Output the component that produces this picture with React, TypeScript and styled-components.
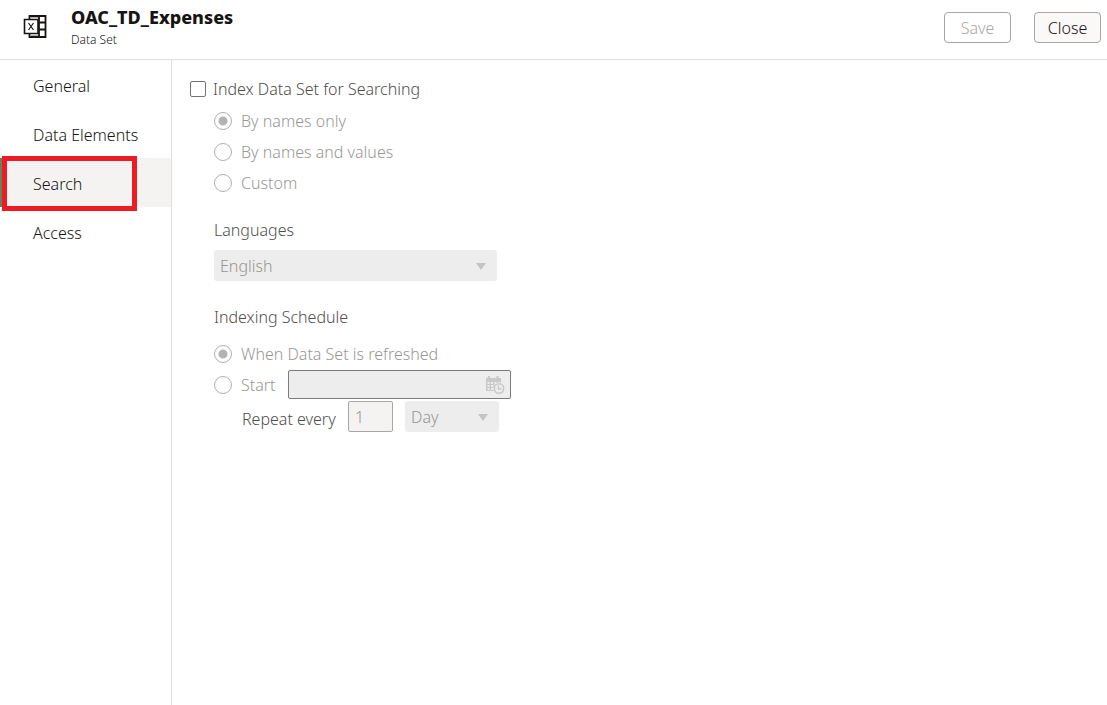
import React from "react";
import styled, { createGlobalStyle, css } from "styled-components";

const GlobalStyle = createGlobalStyle`
  *, *::before, *::after { box-sizing: border-box; }
  body { margin: 0; background: #fff; color: #161513; }
  body, button, input, select {
    font-family: "Noto Sans", "Open Sans", sans-serif;
    font-size: 16px;
    font-weight: 350;
    line-height: 24px;
  }
`;

const Page = styled.div`
  display: flex;
  flex-direction: column;
  min-height: 100vh;
`;

const Header = styled.header`
  display: flex;
  align-items: flex-start;
  gap: 24px;
  height: 60px;
  padding: 6px 6px 0 23px;
  border-bottom: 1px solid #dfdfdf;
`;

const FileIcon = styled.svg`
  flex: none;
  width: 24px;
  height: 24px;
  margin-top: 8px;
`;

const Titles = styled.div`
  flex: 1;
`;

const Title = styled.h1`
  margin: 0;
  font-size: 18px;
  font-weight: 800;
  line-height: 22px;
`;

const Subtitle = styled.p`
  margin: 0;
  font-size: 12px;
  line-height: 24px;
`;

const Actions = styled.div`
  display: flex;
  gap: 23px;
  padding-top: 6px;
`;

const Button = styled.button`
  width: 67px;
  height: 31px;
  padding: 0;
  border: 1px solid #a8a6a4;
  border-radius: 4px;
  background: #fbf9f8;
  color: #161513;

  &:disabled {
    background: #fff;
    color: #a9a8a7;
  }
`;

const Body = styled.div`
  display: flex;
  flex: 1;
`;

const Nav = styled.nav`
  flex: none;
  width: 172px;
  border-right: 1px solid #dfdfdf;
`;

const NavItem = styled.a<{ $selected?: boolean }>`
  position: relative;
  display: flex;
  align-items: center;
  height: 49px;
  padding: 3px 0 0 33px;
  color: #161513;
  text-decoration: none;
  ${(p) =>
    p.$selected &&
    css`
      background: #f4f3f1;
      box-shadow: inset 4px 0 0 #67825b;
    `}
`;

const Highlight = styled.span`
  position: absolute;
  inset: -2px 34px -4px 2px;
  border: 5px solid #ed1c24;
`;

const Main = styled.main`
  flex: 1;
  padding: 17px 18px;
`;

const Choice = styled.label<{ $disabled?: boolean }>`
  display: flex;
  align-items: center;
  gap: ${(p) => (p.$disabled ? 9 : 7)}px;
  min-height: ${(p) => (p.$disabled ? 31 : 24)}px;
  color: ${(p) => (p.$disabled ? "#999795" : "#504e4c")};
`;

const Checkbox = styled.input`
  appearance: none;
  flex: none;
  width: 16px;
  height: 16px;
  margin: 0;
  border: 1px solid #75726f;
  border-radius: 2px;
  background: #fff;
`;

const Radio = styled.input`
  appearance: none;
  flex: none;
  width: 18px;
  height: 18px;
  margin: 0;
  border: 1px solid #b0b0b0;
  border-radius: 50%;
  background: #fff;

  &:checked {
    background: radial-gradient(circle, #b3b3b3 4px, #fff 5px);
  }
`;

const Details = styled.div`
  padding-left: 24px;
`;

const Group = styled.fieldset`
  min-width: 0;
  margin: 0;
  padding: 0;
  border: 0;
`;

const ModeGroup = styled(Group)`
  padding-top: 4px;
`;

const Field = styled.div`
  padding: 20px 0 24px;
`;

const Caption = styled.label`
  display: block;
  margin-bottom: 8px;
  color: #504e4c;
`;

const Legend = styled.legend`
  padding: 0;
  margin-bottom: 9px;
  color: #504e4c;
`;

const SelectBox = styled.div<{ $width: number }>`
  position: relative;
  width: ${(p) => p.$width}px;
`;

const Select = styled.select`
  appearance: none;
  display: block;
  width: 100%;
  height: 31px;
  padding: 0 30px 0 6px;
  border: 0;
  border-radius: 3px;
  background: #ededed;
  color: #979593;
  opacity: 1;
`;

const Arrow = styled.svg`
  position: absolute;
  top: 13px;
  right: 11px;
  width: 10px;
  height: 7px;
  pointer-events: none;
`;

const StartRow = styled.div`
  display: flex;
  align-items: center;
  gap: 12px;
  height: 31px;
`;

const DateBox = styled.div`
  display: flex;
  align-items: center;
  width: 223px;
  height: 29px;
  padding-right: 5px;
  border: 1px solid #7d7b79;
  border-radius: 2px;
  background: #ededed;
`;

const DateInput = styled.input`
  flex: 1;
  min-width: 0;
  border: 0;
  background: transparent;
`;

const CalendarIcon = styled.svg`
  flex: none;
  width: 20px;
  height: 20px;
`;

const RepeatRow = styled.div`
  display: flex;
  align-items: center;
  padding: 1px 0 0 28px;
`;

const RepeatLabel = styled.label`
  width: 106px;
  padding-top: 4px;
  color: #504e4c;
`;

const CountInput = styled.input`
  width: 45px;
  height: 31px;
  margin-right: 12px;
  padding: 0 6px;
  border: 1px solid #a9a7a5;
  border-radius: 2px;
  background: #f4f3f1;
  color: #979593;
`;

interface DropDownProps {
  id: string;
  value: string;
  width: number;
  label?: string;
}

function DropDown({ id, value, width, label }: DropDownProps) {
  return (
    <SelectBox $width={width}>
      <Select id={id} aria-label={label} disabled defaultValue={value}>
        <option>{value}</option>
      </Select>
      <Arrow viewBox="0 0 10 7" aria-hidden="true">
        <path d="M0 0h10L5 7z" fill="#c4c4c4" />
      </Arrow>
    </SelectBox>
  );
}

const sections = ["General", "Data Elements", "Search", "Access"];
const modes = ["By names only", "By names and values", "Custom"];

export default function App() {
  return (
    <Page>
      <GlobalStyle />
      <Header>
        <FileIcon viewBox="0 0 24 24" fill="none" stroke="#161513" aria-hidden="true">
          <path d="M6.500 5V2h16v21h-16v-3" strokeWidth="1.800" />
          <path d="M7.500 3.500h8M7.500 21.500h8" stroke="#b5b3b1" />
          <path d="M16 2v21M16 8.500h6M16 15.500h6" strokeWidth="1.800" />
          <path d="M1.500 5.500h13.500v14h-13.500z" fill="#fff" strokeWidth="1.600" />
          <path d="M5.500 9l5 7M10.500 9l-5 7" strokeWidth="1.200" />
        </FileIcon>
        <Titles>
          <Title>OAC_TD_Expenses</Title>
          <Subtitle>Data Set</Subtitle>
        </Titles>
        <Actions>
          <Button type="button" disabled>Save</Button>
          <Button type="button">Close</Button>
        </Actions>
      </Header>
      <Body>
        <Nav>
          {sections.map((name) => (
            <NavItem
              key={name}
              href={"#" + name.toLowerCase().replace(" ", "-")}
              $selected={name === "Search"}
              aria-current={name === "Search" ? "page" : undefined}
            >
              {name}
              {name === "Search" && <Highlight />}
            </NavItem>
          ))}
        </Nav>
        <Main>
          <Choice>
            <Checkbox type="checkbox" />
            Index Data Set for Searching
          </Choice>
          <Details>
            <ModeGroup aria-label="Index mode">
              {modes.map((mode, i) => (
                <Choice key={mode} $disabled>
                  <Radio type="radio" name="mode" disabled defaultChecked={i === 0} />
                  {mode}
                </Choice>
              ))}
            </ModeGroup>
            <Field>
              <Caption htmlFor="language">Languages</Caption>
              <DropDown id="language" value="English" width={283} />
            </Field>
            <Group>
              <Legend>Indexing Schedule</Legend>
              <Choice $disabled>
                <Radio type="radio" name="schedule" disabled defaultChecked />
                When Data Set is refreshed
              </Choice>
              <StartRow>
                <Choice $disabled>
                  <Radio type="radio" name="schedule" disabled />
                  Start
                </Choice>
                <DateBox>
                  <DateInput type="text" aria-label="Start date and time" disabled />
                  <CalendarIcon viewBox="0 0 20 20" fill="none" aria-hidden="true">
                    <path d="M1 3h15v13H1z" fill="#c9c9c9" />
                    <path d="M4 1v4M12.500 1v4" stroke="#c9c9c9" strokeWidth="2" />
                    <path
                      d="M2.500 7h2v2h-2zM6 7h2v2H6zM9.500 7h2v2h-2zM13 7h2v2h-2zM2.500 10h2v2h-2zM6 10h2v2H6zM2.500 13h2v2h-2zM6 13h2v2H6z"
                      fill="#ededed"
                    />
                    <circle cx="14" cy="13.500" r="6" fill="#ededed" />
                    <circle cx="14" cy="13.500" r="4.700" stroke="#c9c9c9" strokeWidth="1.600" />
                    <path d="M13.500 10.500v3.500h3" stroke="#c9c9c9" strokeWidth="1.400" />
                  </CalendarIcon>
                </DateBox>
              </StartRow>
              <RepeatRow>
                <RepeatLabel htmlFor="repeat-count">Repeat every</RepeatLabel>
                <CountInput id="repeat-count" type="text" defaultValue="1" disabled />
                <DropDown id="repeat-unit" value="Day" width={94} label="Repeat unit" />
              </RepeatRow>
            </Group>
          </Details>
        </Main>
      </Body>
    </Page>
  );
}
